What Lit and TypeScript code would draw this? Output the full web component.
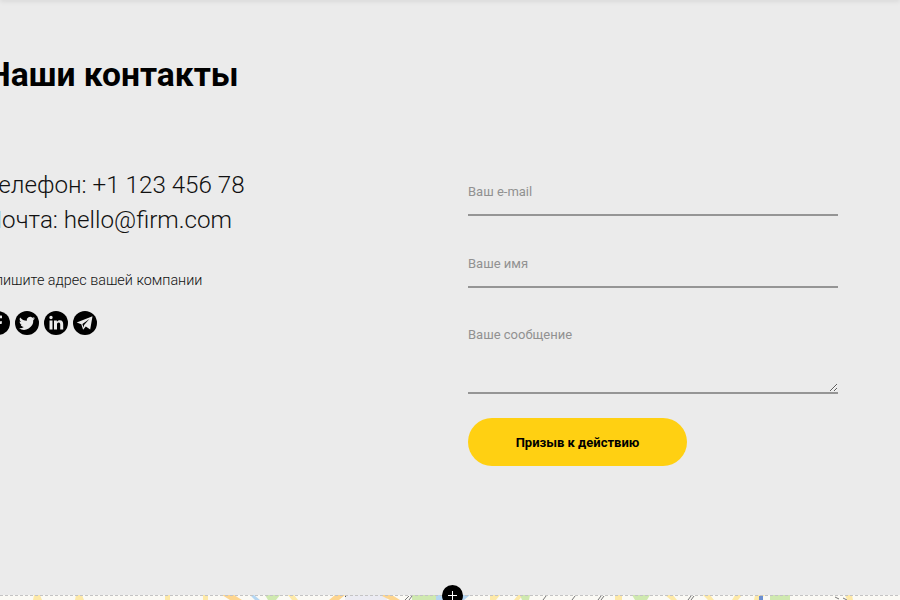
import { LitElement, html, css } from 'lit';
import { customElement } from 'lit/decorators.js';

@customElement('app-root')
export class AppRoot extends LitElement {
  static styles = css`
    :host {
      display: block;
      position: relative;
      width: 900px;
      height: 600px;
      overflow: hidden;
      background: #ebebeb;
      font-family: Roboto, 'Liberation Sans', sans-serif;
      color: #000;
    }

    .shade {
      height: 1px;
      margin-top: -1px;
      box-shadow: 0 0 5px rgba(0, 0, 0, 0.35);
    }

    .section {
      height: 595px;
      box-sizing: border-box;
      display: flex;
      margin-left: -13px;
    }

    .left {
      width: 481px;
      flex: none;
    }

    h2 {
      margin: 56px 0 0;
      font-size: 33.6px;
      line-height: 38px;
      font-weight: 700;
    }

    .big {
      margin-top: 74px;
      margin-left: -2px;
      font-size: 24.2px;
      font-weight: 300;
      line-height: 35px;
      color: #111;
    }

    .addr {
      margin-top: 33px;
      margin-left: -10px;
      font-size: 14.4px;
      font-weight: 300;
      line-height: 20px;
      color: #111;
    }

    .social {
      display: flex;
      gap: 5px;
      margin-top: 20px;
      margin-left: -1px;
    }

    .social svg {
      display: block;
      width: 24px;
      height: 24px;
    }

    form {
      width: 370px;
      padding-top: 169px;
      display: flex;
      flex-direction: column;
    }

    input,
    textarea {
      display: block;
      box-sizing: border-box;
      width: 100%;
      background: transparent;
      border: none;
      border-bottom: 2px solid #959595;
      padding: 0;
      outline: none;
      font: 400 13px Roboto, sans-serif;
      color: #000;
    }

    input::placeholder,
    textarea::placeholder {
      color: #919191;
      opacity: 1;
    }

    input {
      height: 47px;
      padding-bottom: 1px;
      margin-bottom: 25px;
    }

    textarea {
      height: 81px;
      padding-top: 14px;
      margin-bottom: 24px;
      resize: vertical;
    }

    button {
      width: 219px;
      height: 48px;
      border: none;
      border-radius: 24px;
      background: #ffd012;
      color: #000;
      font: 700 13px Roboto, sans-serif;
    }

    .map {
      display: block;
      width: 900px;
      height: 5px;
    }

    .zoom {
      position: absolute;
      left: 442px;
      top: 585px;
      width: 21px;
      height: 21px;
      border-radius: 50%;
      background: #000;
      color: #fff;
      display: flex;
      align-items: center;
      justify-content: center;
    }
  `;

  render() {
    return html`
      <div class="shade"></div>
      <div class="section">
        <div class="left">
          <h2>Наши контакты</h2>
          <div class="big">
            <div>Телефон: +1 123 456 78</div>
            <div>Почта: hello@firm.com</div>
          </div>
          <div class="addr">Напишите адрес вашей компании</div>
          <div class="social">
            <svg viewBox="0 0 24 24">
              <circle cx="12" cy="12" r="12" fill="#000" />
              <path fill="#ebebeb" d="M13.200 20v-7h2.400l.4-2.800h-2.800V8.500c0-.8.3-1.300 1.400-1.300H16V4.700c-.3 0-1.100-.1-2.100-.1-2.100 0-3.500 1.300-3.500 3.600v2H8V13h2.400v7z" />
            </svg>
            <svg viewBox="0 0 24 24">
              <circle cx="12" cy="12" r="12" fill="#000" />
              <path fill="#ebebeb" d="M20 7.300c-.6.3-1.200.4-1.900.5.700-.4 1.200-1 1.400-1.800-.6.4-1.300.7-2.100.8a3.300 3.300 0 0 0-5.600 3C9.100 9.700 6.700 8.400 5.100 6.400c-.9 1.500-.4 3.400 1 4.400-.5 0-1-.2-1.500-.4 0 1.600 1.100 3 2.600 3.300-.5.100-1 .1-1.500 0 .4 1.300 1.600 2.200 3.100 2.300A6.600 6.600 0 0 1 4 17.300a9.300 9.300 0 0 0 14.300-8.200c.7-.4 1.300-1 1.700-1.800z" />
            </svg>
            <svg viewBox="0 0 24 24">
              <circle cx="12" cy="12" r="12" fill="#000" />
              <path fill="#ebebeb" d="M5.500 9.500h3v9h-3zM7 4.800a1.700 1.700 0 1 1 0 3.400 1.700 1.700 0 0 1 0-3.400zM10 9.500h2.900v1.200c.5-.8 1.500-1.500 2.900-1.500 2.700 0 3.400 1.800 3.400 4.200v5.100h-3v-4.600c0-1.200-.1-2.300-1.500-2.300s-1.700 1-1.700 2.200v4.700h-3z" />
            </svg>
            <svg viewBox="0 0 24 24">
              <circle cx="12" cy="12" r="12" fill="#000" />
              <path fill="#ebebeb" d="M19.500 5.300 3.700 11.600l4.600 1.600 1.800 5.600 2.700-3.400 4.400 3.200zM9.400 13l7-5-5.300 5.900-.6 2.700z" />
            </svg>
          </div>
        </div>
        <form>
          <input type="text" placeholder="Ваш e-mail" />
          <input type="text" placeholder="Ваше имя" />
          <textarea placeholder="Ваше сообщение"></textarea>
          <button type="button">Призыв к действию</button>
        </form>
      </div>
      <svg class="map" viewBox="0 0 900 5">
        <rect width="900" height="5" fill="#fbfaf5" />
        <rect x="345" width="42" height="5" fill="#ebebf2" />
        <path fill="#fde9a8" d="M34 0h6l2 5h-9zM76 0h6l2 5h-9zM165 0h5v5h-5zM203 0h5v5h-5zM288 0h6l4 5h-6zM490 0h10l-4 5h-6zM518 0h5l-4 5h-5zM615 0h7v5h-7zM665 0h8l4 5h-6zM703 0h7l4 5h-6zM735 0h7l-4 5h-6zM755 0h10l-6 5h-5zM845 0h7l1 5h-6z" />
        <path fill="#fdd58f" d="M222 0h12l8 5h-12zM335 0h10l-6 5h-10zM380 0h12l8 5h-10z" />
        <path fill="#cfe9b0" d="M265 0h15l-4 5h-8zM412 0h24v5h-24zM520 0h10l-1 5h-7zM632 0h18l-3 5h-12zM770 0h20v5h-20z" />
        <path fill="#b5d6f2" d="M250 0h4l6 5h-5zM436 0h34l-6 5h-28z" />
        <path fill="none" stroke="#777" d="M405 5l4-4M409 5l3-4M543 5l3-4M572 5l3-4M598 5l3-4M601 5l3-4M688 5l3-4M691 5l3-4M835 2l4 2M843 3l4 2" />
        <rect x="759" y="1" width="4" height="4" fill="#6b8fd0" />
        <rect x="345" y="0" width="1" height="2" fill="#555" />
        <line x1="0" y1="0.500" x2="900" y2="0.500" stroke="#c4c4c4" stroke-dasharray="3 2" />
      </svg>
      <div class="zoom">
        <svg width="9" height="9" viewBox="0 0 9 9"><path d="M4.500 0v9M0 4.500h9" stroke="#fff" stroke-width="1" /></svg>
      </div>
    `;
  }
}
